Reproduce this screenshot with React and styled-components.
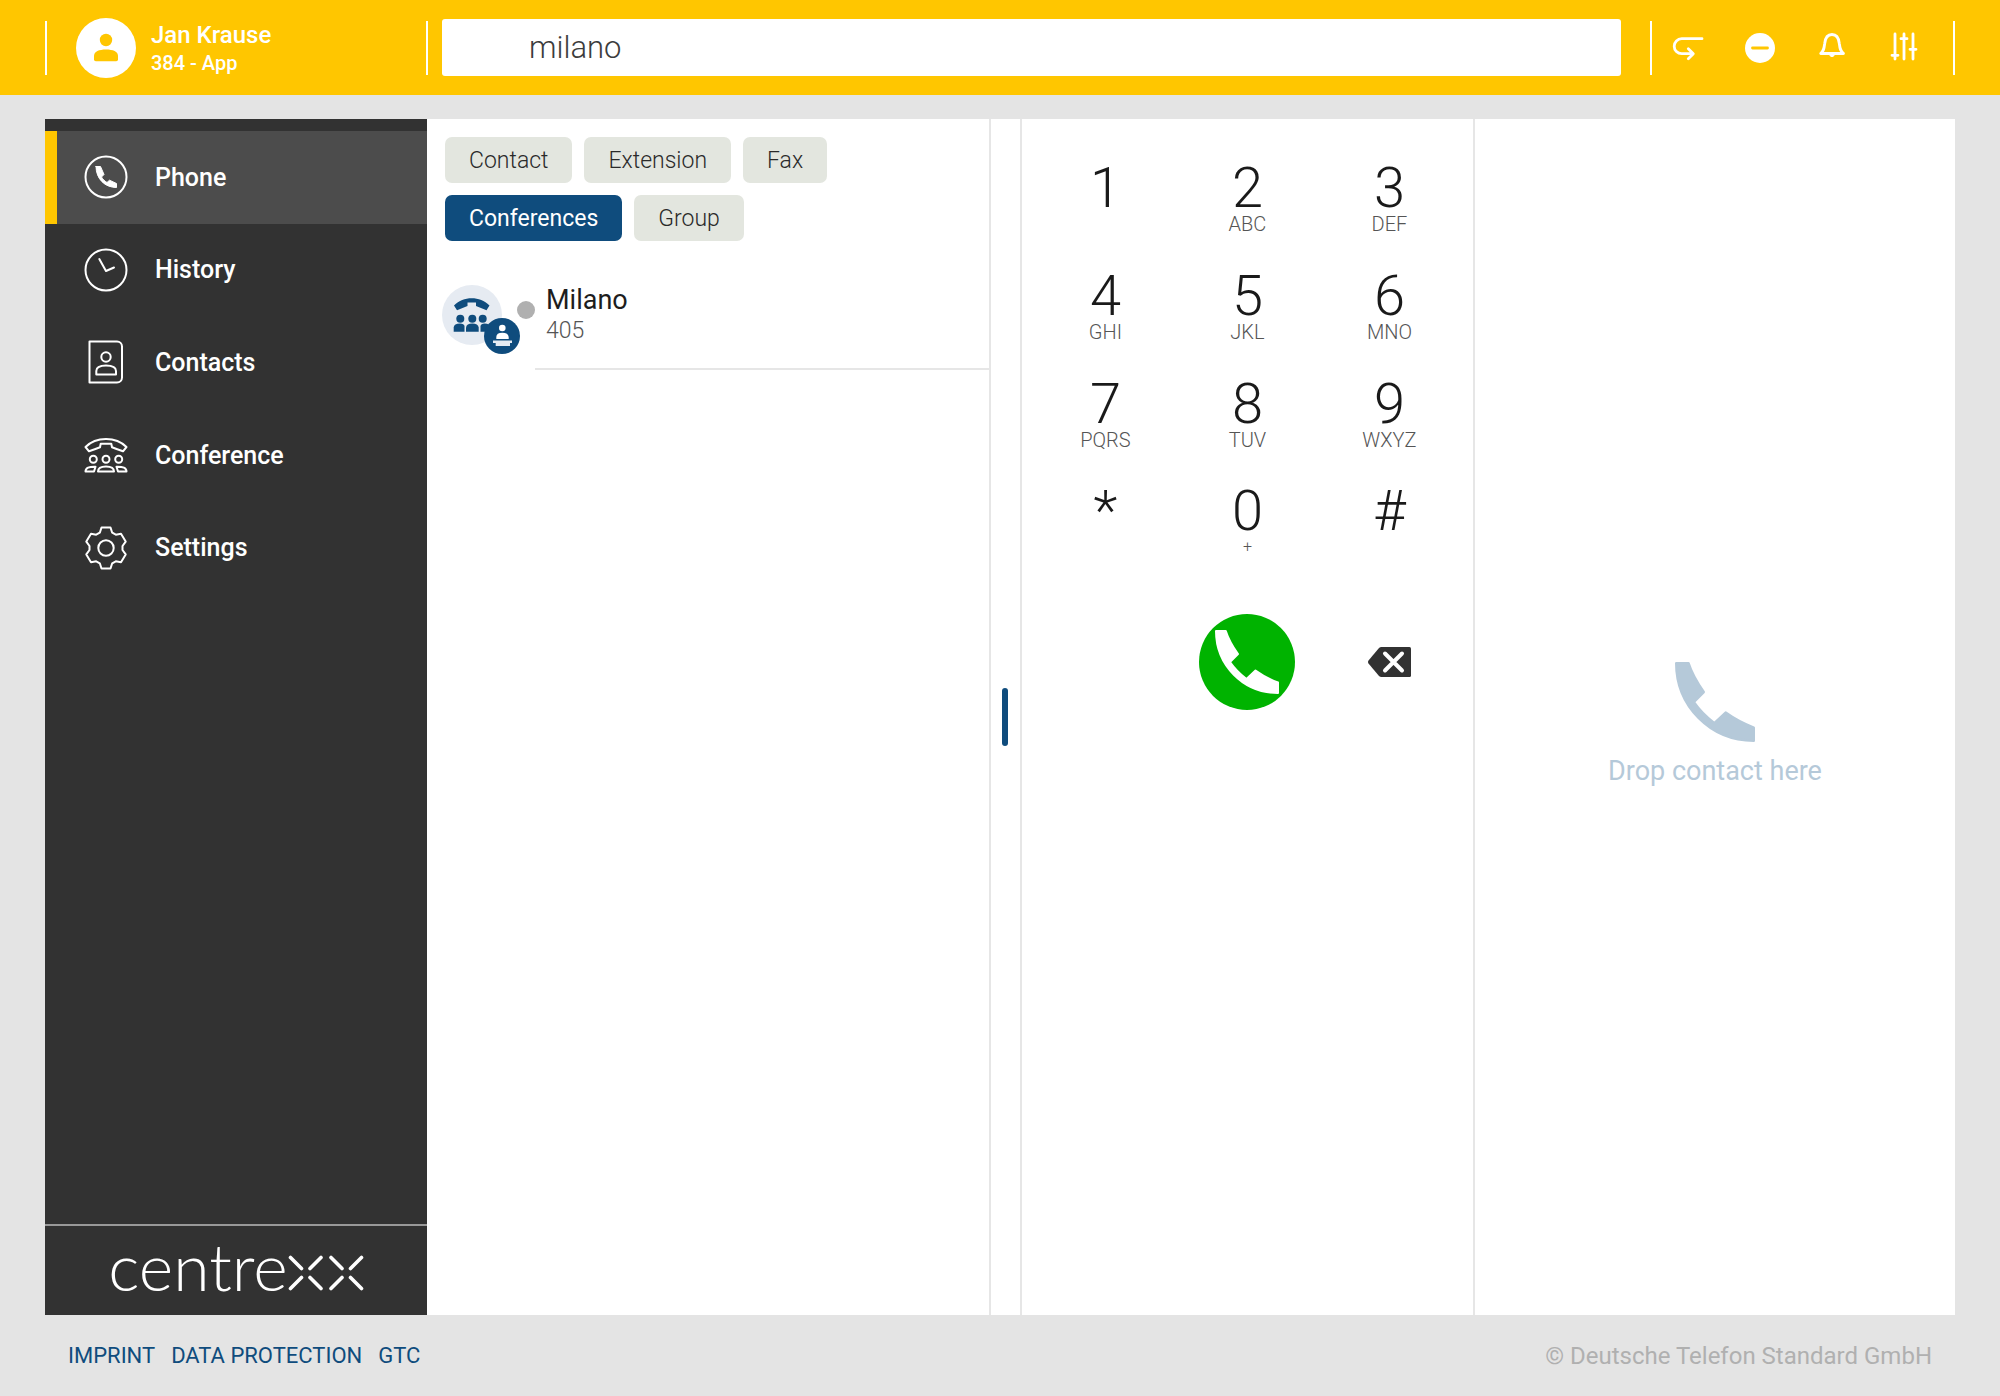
import React from "react";
import styled, { createGlobalStyle } from 'styled-components';

const yellow = '#ffc600';
const blue = '#0f4c7d';
const line = '#e6e6e6';

const GlobalStyle = createGlobalStyle`
    *, *::before, *::after {
        box-sizing: border-box;
    }

    body {
        margin: 0;
        background: #e4e4e4;
        color: #1d1d1d;
        font-family: Roboto, "Open Sans", sans-serif;
    }

    button, input {
        font: inherit;
        color: inherit;
        border: 0;
        padding: 0;
        background: none;
    }

    button {
        cursor: pointer;
    }

    svg {
        display: block;
        flex: none;
    }
`;

const Page = styled.div`
    display: flex;
    flex-direction: column;
    min-height: 100vh;
`;

/* header */

const Header = styled.header`
    display: flex;
    align-items: center;
    height: 95px;
    padding: 0 45px;
    background: ${yellow};
    color: #ffffff;
`;

const User = styled.div`
    display: flex;
    align-items: center;
    gap: 15px;
    width: 383px;
    height: 54px;
    padding-left: 29px;
    border-left: 2px solid #ffffff;
    border-right: 2px solid #ffffff;
`;

const UserName = styled.div`
    font-size: 24px;
    line-height: 30px;
    font-weight: 500;
`;

const UserLine = styled.div`
    font-size: 20px;
    line-height: 26px;
    font-weight: 500;
`;

const Search = styled.input`
    flex: 1;
    min-width: 0;
    height: 57px;
    margin: 0 29px 0 14px;
    padding: 0 20px 0 87px;
    border-radius: 3px;
    background: #ffffff;
    color: #3c3c3c;
    font-size: 31px;
    font-weight: 300;
    outline: none;
`;

const Tools = styled.div`
    display: flex;
    width: 305px;
    height: 54px;
    border-left: 2px solid #ffffff;
    border-right: 2px solid #ffffff;
`;

const Tool = styled.button`
    display: flex;
    align-items: center;
    justify-content: center;
    width: 72px;
    height: 54px;
`;

/* body */

const Main = styled.div`
    display: flex;
    flex: 1;
    margin: 24px 45px 0;
    background: #ffffff;
`;

const Sidebar = styled.aside`
    display: flex;
    flex-direction: column;
    justify-content: space-between;
    width: 382px;
    padding-top: 12px;
    background: #323232;
    color: #ffffff;
`;

const Nav = styled.nav`
    display: grid;
    grid-template-rows: repeat(5, 1fr);
    height: 463px;
`;

const NavItem = styled.a`
    display: flex;
    align-items: center;
    gap: 27px;
    padding-left: 27px;
    border-left: 12px solid ${props => props.$active ? yellow : 'transparent'};
    background: ${props => props.$active ? '#4c4c4c' : 'none'};
    color: inherit;
    font-size: 25px;
    font-weight: 500;
    text-decoration: none;
`;

const Brand = styled.div`
    display: flex;
    align-items: baseline;
    justify-content: center;
    height: 91px;
    padding-top: 8px;
    border-top: 2px solid #999999;
    font-family: Lato, sans-serif;
    font-size: 66px;
    line-height: 64px;
    font-weight: 300;
`;

const Results = styled.section`
    flex: 563;
    min-width: 0;
    padding-top: 18px;
`;

const Filters = styled.div`
    display: flex;
    flex-wrap: wrap;
    gap: 12px;
    max-width: 440px;
    padding: 0 18px;
`;

const Chip = styled.button`
    height: 46px;
    padding: 0 24px;
    border-radius: 7px;
    background: ${props => props.$active ? blue : '#e3e6df'};
    color: ${props => props.$active ? '#ffffff' : '#2a2a2a'};
    font-size: 23px;
    font-weight: ${props => props.$active ? 400 : 300};
`;

const Contact = styled.div`
    display: flex;
    margin-top: 44px;
    padding-left: 15px;
`;

const Avatar = styled.div`
    position: relative;
    width: 60px;
    height: 60px;
    border-radius: 50%;
    background: #e6ebf2;
`;

const Badge = styled.div`
    position: absolute;
    right: -18px;
    bottom: -9px;
    border-radius: 50%;
    background: ${blue};
`;

const Presence = styled.div`
    width: 18px;
    height: 18px;
    margin: 16px 0 0 15px;
    border-radius: 50%;
    background: #b0b0b0;
`;

const ContactText = styled.div`
    flex: 1;
    height: 85px;
    padding-left: 11px;
    border-bottom: 2px solid ${line};
`;

const ContactName = styled.div`
    font-size: 27px;
    line-height: 31px;
`;

const ContactNumber = styled.div`
    color: #555555;
    font-size: 23px;
    line-height: 30px;
    font-weight: 300;
`;

const Resizer = styled.div`
    display: flex;
    align-items: center;
    justify-content: center;
    width: 33px;
    border-left: 2px solid ${line};
    border-right: 2px solid ${line};
`;

const Handle = styled.div`
    width: 6px;
    height: 58px;
    border-radius: 3px;
    background: ${blue};
`;

const Dialer = styled.section`
    display: flex;
    flex-direction: column;
    align-items: center;
    flex: 452;
    padding-top: 39px;
    border-right: 2px solid ${line};
`;

const Keys = styled.div`
    display: grid;
    grid-template-columns: repeat(3, 142px);
    grid-template-rows: repeat(4, 1fr);
    height: 431px;
`;

const Key = styled.button`
    display: flex;
    flex-direction: column;
    align-items: center;
    justify-content: flex-start;
    color: #1a1a1a;
    font-size: 56px;
    line-height: 60px;
    font-weight: 300;
`;

const KeyLetters = styled.span`
    margin-top: -4px;
    color: #555555;
    font-size: ${props => props.$small ? 16 : 20}px;
    line-height: 20px;
    font-weight: 300;
`;

const CallRow = styled.div`
    display: grid;
    grid-template-columns: repeat(3, 142px);
    justify-items: center;
    align-items: center;
    margin-top: 25px;
`;

const CallButton = styled.button`
    display: flex;
    grid-column: 2;
    align-items: center;
    justify-content: center;
    width: 96px;
    height: 96px;
    border-radius: 50%;
    background: #00b300;
    color: #ffffff;
`;

const DropZone = styled.section`
    display: flex;
    flex-direction: column;
    align-items: center;
    justify-content: center;
    flex: 481;
    color: #b5c9d9;
    font-size: 27px;
    line-height: 32px;
`;

const DropIcon = styled.div`
    padding: 15px 16px 13px;
`;

/* footer */

const Footer = styled.footer`
    display: flex;
    align-items: center;
    justify-content: space-between;
    height: 81px;
    padding: 0 68px;
    color: #b0b0b0;
    font-size: 24px;
`;

const FooterLinks = styled.div`
    display: flex;
    gap: 16px;
`;

const FooterLink = styled.a`
    color: ${blue};
    font-size: 22px;
    text-decoration: none;
`;

const Handset = ({ size }) => (
    <svg width={size} height={size} viewBox="0 0 64 64" fill="currentColor" stroke="currentColor" strokeWidth="2" strokeLinejoin="round">
        <path d="M1 1H10.8C13.5 9.5 18 17 23 24L15 32C19.5 38.5 25 44 31.5 49L40.5 40.5C47.5 45.5 55 49.5 63 52.5V63C28 63 1 35 1 1Z" />
    </svg>
);

const stroke = {
    fill: 'none',
    stroke: 'currentColor',
    strokeLinejoin: 'round',
    strokeLinecap: 'round',
};

const NavIcon = ({ children }) => (
    <svg width="44" height="44" viewBox="0 0 44 44" strokeWidth="2" {...stroke}>{children}</svg>
);

const ToolIcon = ({ children }) => (
    <svg width="32" height="32" viewBox="0 0 32 32" strokeWidth="2.8" {...stroke}>{children}</svg>
);

const navItems = [
    {
        label: 'Phone',
        icon: (
            <NavIcon>
                <circle cx="22" cy="22" r="20.5" />
                <path fill="currentColor" strokeWidth="1" d="M12 11.5H16.5L20 19.5L17.5 22C19 24.5 20.5 26 23 27.5L25.5 25.2L32.5 28.5V32.5C21 32.5 12 24 12 11.5Z" />
            </NavIcon>
        ),
    },
    {
        label: 'History',
        icon: (
            <NavIcon>
                <circle cx="22" cy="22" r="20.5" />
                <path d="M15.3 11L22 23L30 19.5" />
            </NavIcon>
        ),
    },
    {
        label: 'Contacts',
        icon: (
            <NavIcon>
                <path d="M5.5 1.5H33A5 5 0 0 1 38 6.5V37.5A5 5 0 0 1 33 42.5H5.5Z" />
                <circle cx="22" cy="17" r="4.7" />
                <path d="M12.3 34.5V31C12.3 27.5 16 25.5 22 25.5S32 27.5 32 31V34.5Z" />
            </NavIcon>
        ),
    },
    {
        label: 'Conference',
        icon: (
            <NavIcon>
                <path d="M1.5 14C7 8.5 14 6 22 6S37 8.5 42.5 14L39 18.3C36 17.3 31 15.5 28 14.3L27.3 10.8H16.7L16 14.3C13 15.5 8 17.3 5 18.3Z" />
                <circle cx="9.3" cy="26.2" r="3.5" />
                <circle cx="22" cy="26.2" r="3.5" />
                <circle cx="34.7" cy="26.2" r="3.5" />
                <path d="M1.5 38.5C1.5 35 5 33.5 11.5 33.7L10 38.5Z" />
                <path d="M14 38.5C14 35 17 33.5 22 33.5S30 35 30 38.5Z" />
                <path d="M42.5 38.5C42.5 35 39 33.5 32.5 33.7L34 38.5Z" />
            </NavIcon>
        ),
    },
    {
        label: 'Settings',
        icon: (
            <NavIcon>
                <path d="M17.5 1.5H26.5L28.2 6.7L31.8 8.7L37 7.8L41.7 15.6L38.5 20V24L41.7 28.4L37 36.2L31.8 35.3L28.2 37.3L26.5 42.5H17.5L15.8 37.3L12.2 35.3L7 36.2L2.3 28.4L5.5 24V20L2.3 15.6L7 7.8L12.2 8.7L15.8 6.7Z" />
                <circle cx="22" cy="22" r="7.7" />
            </NavIcon>
        ),
    },
];

const tools = [
    {
        label: 'Forward calls',
        icon: <path d="M30 6.7H9.7A7.5 7.5 0 0 0 9.7 21.7H21M16.3 16.8L21.3 21.7L16.3 26.7" />,
    },
    {
        label: 'Do not disturb',
        icon: (
            <>
                <circle cx="16" cy="16" r="15" fill="currentColor" stroke="none" />
                <path d="M8.5 16H23.5" stroke={yellow} />
            </>
        ),
    },
    {
        label: 'Notifications',
        icon: (
            <>
                <path d="M4.7 21.5H27.5C24.5 19.5 24 17 23.3 11.5C22.7 5.5 20.5 2.5 16 2.5S9.3 5.5 8.7 11.5C8 17 7.5 19.5 4.7 21.5Z" />
                <path d="M13.5 22.5A2.6 3 0 0 0 18.5 22.5Z" fill="currentColor" strokeWidth="1" />
            </>
        ),
    },
    {
        label: 'Audio settings',
        icon: <path d="M7 2V27M16 2V27M25 2V27M4 23.3H10M13 6.7H19M22 17.3H28" />,
    },
];

const filters = ['Contact', 'Extension', 'Fax', 'Conferences', 'Group'];

const keys = [
    ['1', ''], ['2', 'ABC'], ['3', 'DEF'],
    ['4', 'GHI'], ['5', 'JKL'], ['6', 'MNO'],
    ['7', 'PQRS'], ['8', 'TUV'], ['9', 'WXYZ'],
    ['*', ''], ['0', '+'], ['#', ''],
];

const UserIcon = () => (
    <svg width="60" height="60" viewBox="0 0 60 60">
        <circle cx="30" cy="30" r="30" fill="#ffffff" />
        <circle cx="30" cy="22" r="6.2" fill={yellow} />
        <path fill={yellow} d="M18 41.5V38C18 33.5 23 31.5 30 31.5S42 33.5 42 38V41.5Q42 43.3 40.2 43.3H19.8Q18 43.3 18 41.5Z" />
    </svg>
);

const ConferenceIcon = () => (
    <svg width="60" height="60" viewBox="0 0 60 60" fill={blue}>
        <path d="M12 20.5C17 15.5 23 13.3 29.7 13.3S42.5 15.5 47.5 20.5L44.5 25.2L34 21V17.5H25.5V21L15 25.2Z" />
        <circle cx="18.3" cy="33.7" r="4" />
        <circle cx="30.3" cy="33.7" r="4" />
        <circle cx="40.7" cy="33.7" r="4" />
        <path d="M11.7 46.7V42.5Q12 38.5 18 38.5Q22 38.5 22.5 41V46.7Z" />
        <path d="M24 46.7V42.5Q24.5 38.5 30.3 38.5T36.7 42.5V46.7Z" />
        <path d="M38.5 46.7V41Q39 38.5 42.5 38.5Q48 38.5 48.5 42.5V46.7Z" />
    </svg>
);

const SpeakerIcon = () => (
    <svg width="36" height="36" viewBox="0 0 36 36" fill="#ffffff">
        <circle cx="18.3" cy="10" r="3.3" />
        <path d="M12.3 21V19Q12.3 14.7 18.3 14.7T24.7 19V21Z" />
        <path fill="#e6ebf2" d="M9 22.5H28V25H26V28H11.7V25H9Z" />
    </svg>
);

const BrandCross = () => (
    <svg width="76" height="36" viewBox="0 0 76 36" strokeWidth="3.6" {...stroke}>
        <path d="M2.5 2.5L13.5 13.5M33 2.5L22 13.5M2.5 33.5L13.5 22.5M33 33.5L22 22.5" />
        <path d="M43 2.5L54 13.5M73.5 2.5L62.5 13.5M43 33.5L54 22.5M73.5 33.5L62.5 22.5" />
    </svg>
);

class App extends React.Component {
    render() {
        return (
            <Page>
                <GlobalStyle />
                <Header>
                    <User>
                        <UserIcon />
                        <div>
                            <UserName>Jan Krause</UserName>
                            <UserLine>384 - App</UserLine>
                        </div>
                    </User>
                    <Search type="text" aria-label="Search" defaultValue="milano" />
                    <Tools>
                        {tools.map(tool => (
                            <Tool key={tool.label} aria-label={tool.label}>
                                <ToolIcon>{tool.icon}</ToolIcon>
                            </Tool>
                        ))}
                    </Tools>
                </Header>
                <Main>
                    <Sidebar>
                        <Nav>
                            {navItems.map(item => (
                                <NavItem key={item.label} href="#" $active={item.label === 'Phone'}>
                                    {item.icon}
                                    {item.label}
                                </NavItem>
                            ))}
                        </Nav>
                        <Brand>
                            centre<BrandCross />
                        </Brand>
                    </Sidebar>
                    <Results>
                        <Filters>
                            {filters.map(name => (
                                <Chip key={name} $active={name === 'Conferences'}>{name}</Chip>
                            ))}
                        </Filters>
                        <Contact>
                            <Avatar>
                                <ConferenceIcon />
                                <Badge><SpeakerIcon /></Badge>
                            </Avatar>
                            <Presence />
                            <ContactText>
                                <ContactName>Milano</ContactName>
                                <ContactNumber>405</ContactNumber>
                            </ContactText>
                        </Contact>
                    </Results>
                    <Resizer>
                        <Handle />
                    </Resizer>
                    <Dialer>
                        <Keys>
                            {keys.map(([digit, letters]) => (
                                <Key key={digit}>
                                    {digit}
                                    {letters && <KeyLetters $small={letters === '+'}>{letters}</KeyLetters>}
                                </Key>
                            ))}
                        </Keys>
                        <CallRow>
                            <CallButton aria-label="Call">
                                <Handset size={64} />
                            </CallButton>
                            <button aria-label="Delete">
                                <svg width="43" height="30" viewBox="0 0 43 30">
                                    <path fill="#323232" d="M0.5 13.5L11 1Q12 0 13.5 0H41.5Q43 0 43 1.5V28.5Q43 30 41.5 30H13.5Q12 30 11 29L0.5 16.5Q-0.5 15 0.5 13.5Z" />
                                    <path stroke="#ffffff" strokeWidth="4" strokeLinecap="round" d="M17 6.5L34 23.5M34 6.5L17 23.5" />
                                </svg>
                            </button>
                        </CallRow>
                    </Dialer>
                    <DropZone>
                        <DropIcon><Handset size={80} /></DropIcon>
                        Drop contact here
                    </DropZone>
                </Main>
                <Footer>
                    <FooterLinks>
                        <FooterLink href="#">IMPRINT</FooterLink>
                        <FooterLink href="#">DATA PROTECTION</FooterLink>
                        <FooterLink href="#">GTC</FooterLink>
                    </FooterLinks>
                    <span>© Deutsche Telefon Standard GmbH</span>
                </Footer>
            </Page>
        );
    }
}

export default App;
